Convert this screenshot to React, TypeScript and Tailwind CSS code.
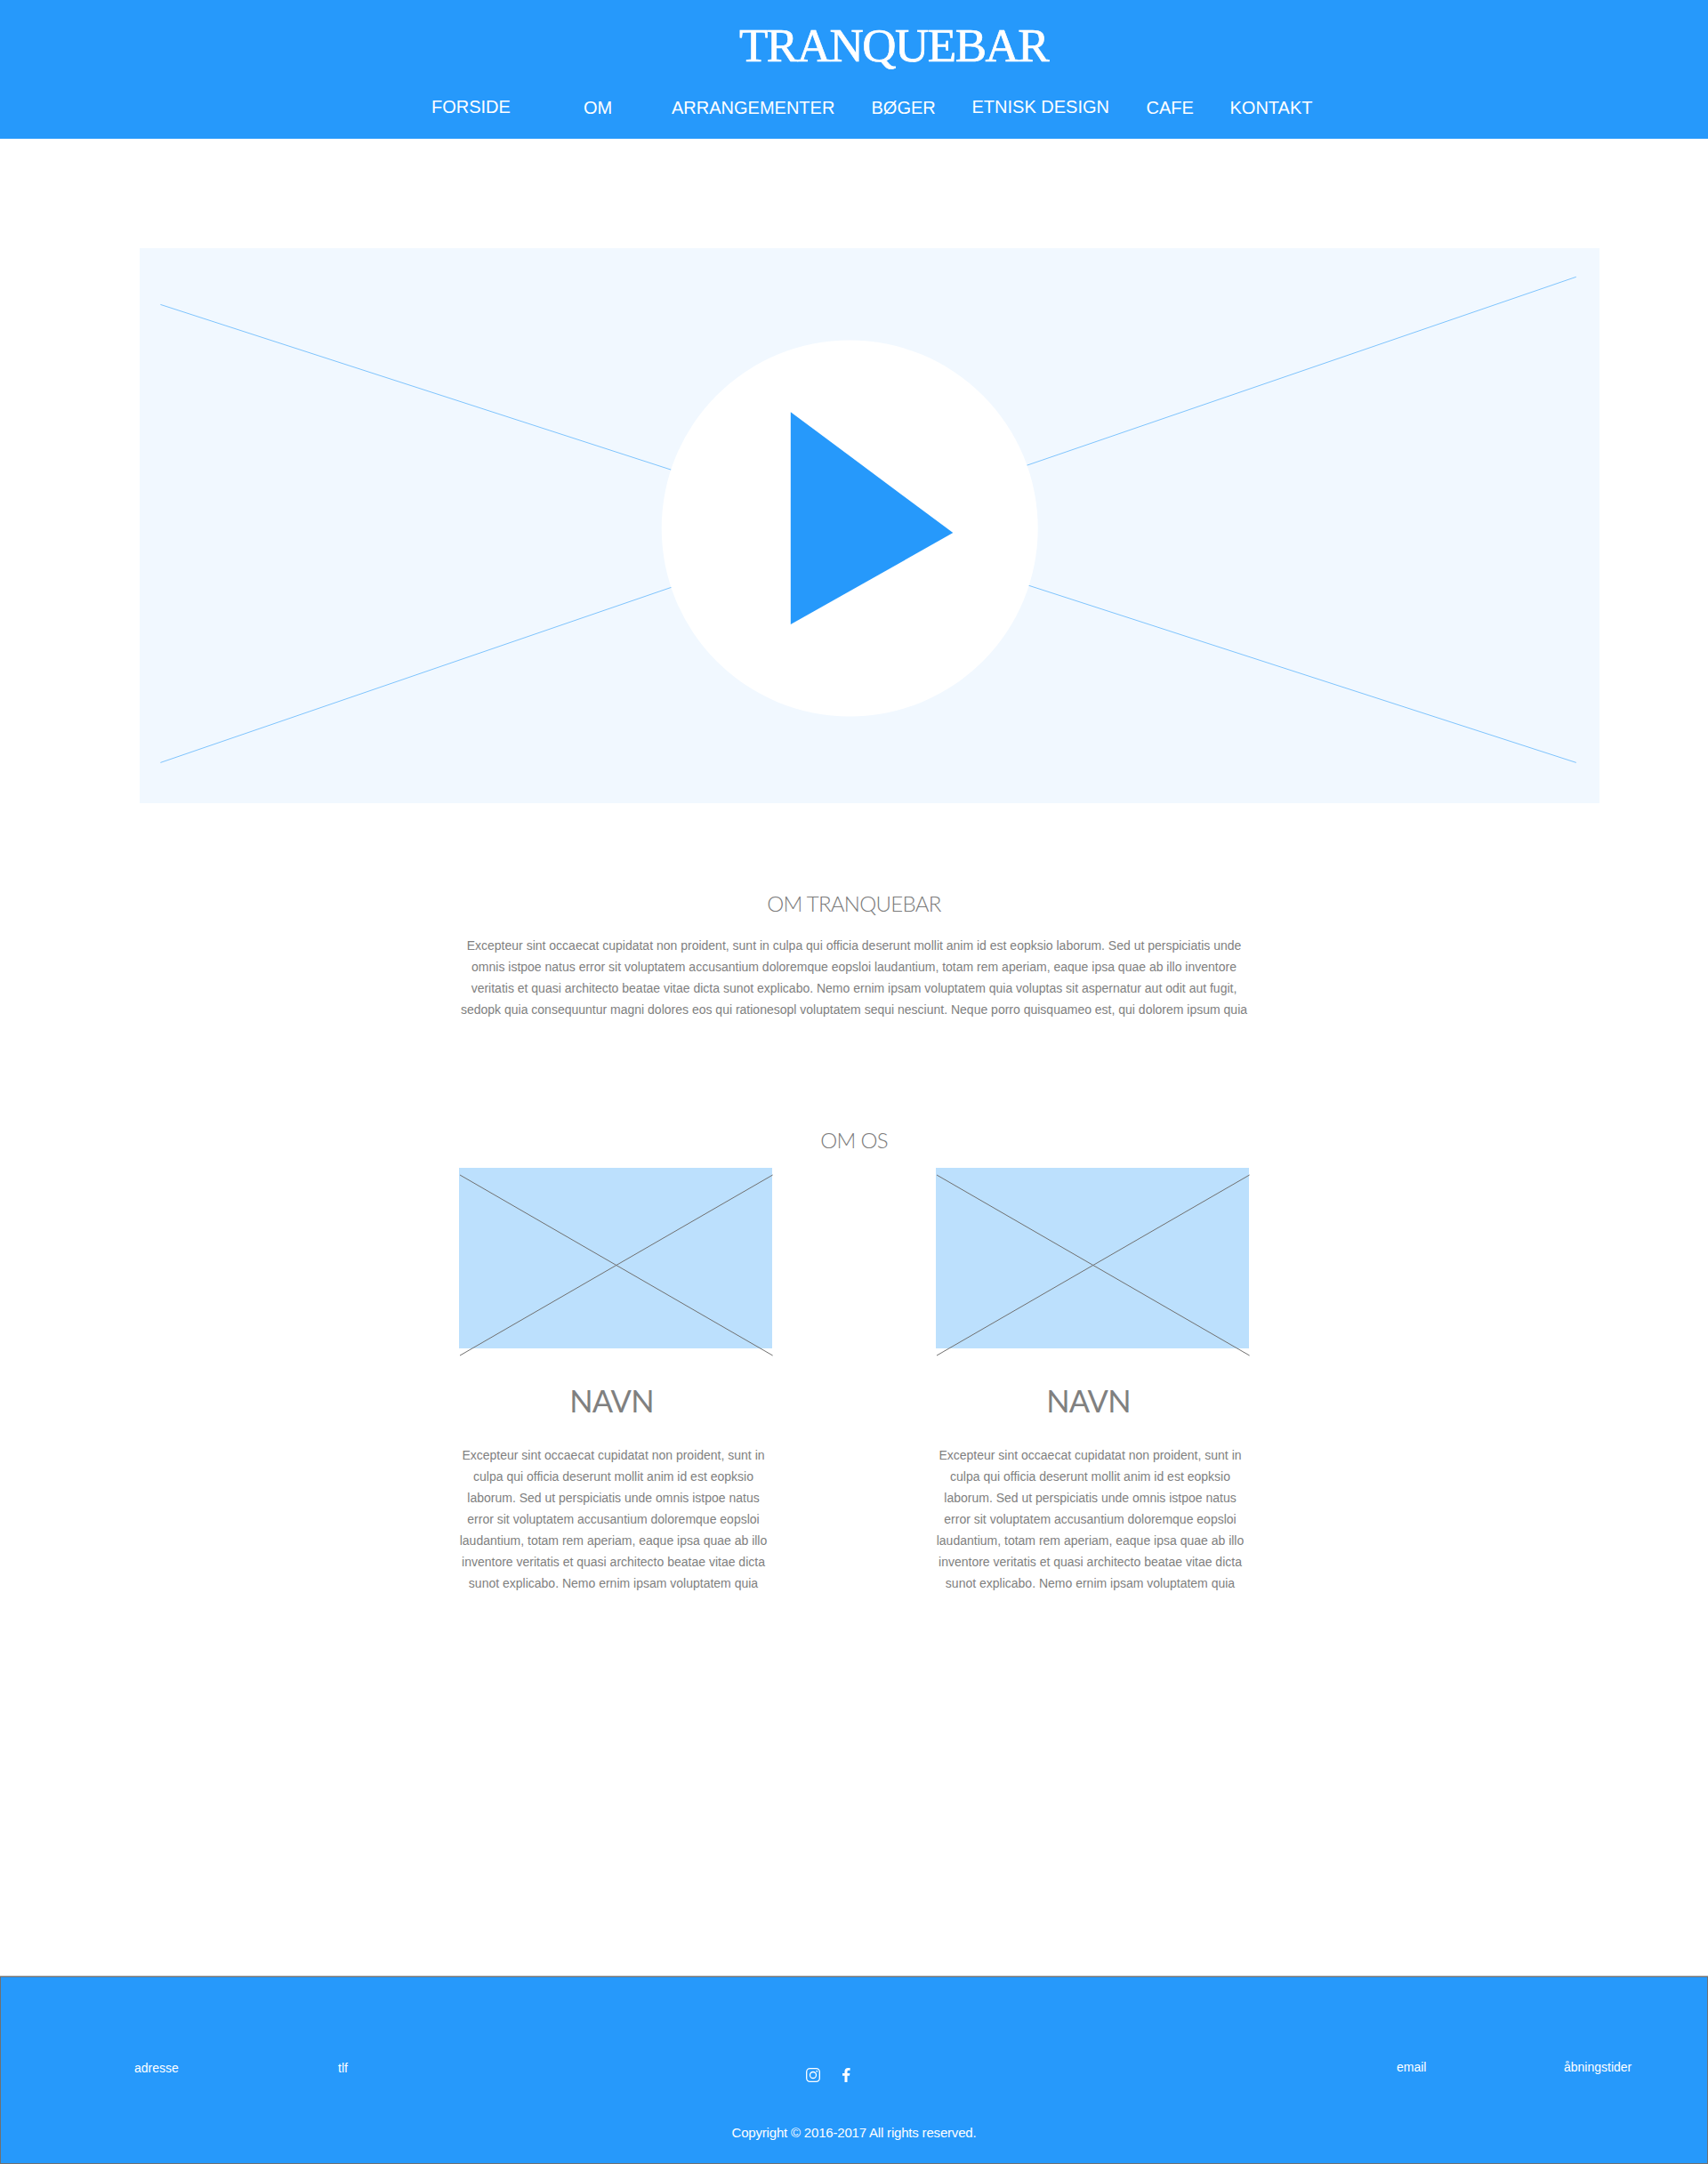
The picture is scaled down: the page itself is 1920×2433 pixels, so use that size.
import React from "react";

const navItems = [
  { label: "FORSIDE", raised: true },
  { label: "OM", raised: false },
  { label: "ARRANGEMENTER", raised: false },
  { label: "BØGER", raised: false },
  { label: "ETNISK DESIGN", raised: true },
  { label: "CAFE", raised: false },
  { label: "KONTAKT", raised: false },
];

const aboutLines = [
  "Excepteur sint occaecat cupidatat non proident, sunt in culpa qui officia deserunt mollit anim id est eopksio laborum. Sed ut perspiciatis unde",
  "omnis istpoe natus error sit voluptatem accusantium doloremque eopsloi laudantium, totam rem aperiam, eaque ipsa quae ab illo inventore",
  "veritatis et quasi architecto beatae vitae dicta sunot explicabo. Nemo ernim ipsam voluptatem quia voluptas sit aspernatur aut odit aut fugit,",
  "sedopk quia consequuntur magni dolores eos qui rationesopl voluptatem sequi nesciunt. Neque porro quisquameo est, qui dolorem ipsum quia",
];

const personLines = [
  "Excepteur sint occaecat cupidatat non proident, sunt in",
  "culpa qui officia deserunt mollit anim id est eopksio",
  "laborum. Sed ut perspiciatis unde omnis istpoe natus",
  "error sit voluptatem accusantium doloremque eopsloi",
  "laudantium, totam rem aperiam, eaque ipsa quae ab illo",
  "inventore veritatis et quasi architecto beatae vitae dicta",
  "sunot explicabo. Nemo ernim ipsam voluptatem quia",
];

function Lines({ lines }: { lines: string[] }) {
  return (
    <p className="flex flex-col items-center text-[14px] leading-[24px] whitespace-nowrap text-[#808080]">
      {lines.map((l) => (
        <span key={l}>{l}</span>
      ))}
    </p>
  );
}

function Header() {
  return (
    <header className="h-[156px] bg-[#2699fb] text-white">
      <h1 className="ml-[831px] pt-[21px] font-['Liberation_Serif',serif] text-[53px] leading-[60px] tracking-[-1.5px] [-webkit-text-stroke:0.7px_white]">
        TRANQUEBAR
      </h1>
      <nav className="mt-[25px] ml-[485px] grid grid-cols-[171px_99px_224.5px_113px_196px_94px_auto] text-[20px] leading-[28px] whitespace-nowrap">
        {navItems.map((n) => (
          <a key={n.label} className={n.raised ? "" : "pt-px"}>
            {n.label}
          </a>
        ))}
      </nav>
    </header>
  );
}

function Video() {
  return (
    <svg className="mt-[123px] ml-[157px] block bg-[#f1f8ff]" width="1641" height="624" viewBox="157 279 1641 624">
      <g stroke="#7fc4fd" strokeWidth="1">
        <line x1="180.4" y1="342.4" x2="1771.8" y2="857.4" />
        <line x1="180.4" y1="857.4" x2="1771.8" y2="311.3" />
      </g>
      <circle cx="955.2" cy="594" r="211.5" fill="#fff" />
      <path d="M888.8 463.2 L1071.3 599.1 L888.8 702 Z" fill="#2699fb" />
    </svg>
  );
}

function SectionTitle({ children }: { children: string }) {
  return (
    <h2 className="text-center font-['Lato',sans-serif] text-[24px] leading-[32px] font-light tracking-[-0.7px] text-[#7b7b7b]">
      {children}
    </h2>
  );
}

function Person() {
  return (
    <article className="w-[352px]">
      <svg className="block overflow-visible bg-[#bce0fd]" width="352" height="203" viewBox="0 0 352 203">
        <g stroke="#707070" strokeWidth="1">
          <line x1="1" y1="8" x2="352.6" y2="211" />
          <line x1="1" y1="211" x2="352.6" y2="8" />
        </g>
      </svg>
      <h3 className="mt-[37px] pr-[9px] text-center font-['Lato',sans-serif] text-[34.5px] leading-[44px] tracking-[-0.7px] text-[#808080]">
        NAVN
      </h3>
      <div className="mt-[27px] pr-[5px]">
        <Lines lines={personLines} />
      </div>
    </article>
  );
}

function Footer() {
  return (
    <footer className="mt-[429px] border-t border-[#c0c4c8] text-[14px] leading-[20px] text-white">
      <div className="h-[211px] border border-[#707070] bg-[#2699fb]">
        <div className="box-content flex h-[30px] pt-[91px]">
          <span className="ml-[150px] w-[229px] pt-px">adresse</span>
          <span className="w-[526px] pt-px">tlf</span>
          <svg className="mt-[11px]" width="16" height="16" viewBox="0 0 16 16" fill="none" stroke="#fff" strokeWidth="1.3">
            <rect x="0.7" y="0.7" width="14.6" height="14.6" rx="3.8" />
            <circle cx="8" cy="8" r="3.5" />
            <circle cx="12.3" cy="3.7" r="0.9" fill="#fff" stroke="none" />
          </svg>
          <svg className="mt-[11px] ml-[25px]" width="9" height="16" viewBox="0 0 9 16" fill="#fff">
            <path d="M2.5 16V8.8H0V6h2.5V3.8C2.5 1.3 4 0 6.2 0 7.3 0 8.3.1 8.6.1v2.6H7C5.800 2.700 5.500 3.300 5.500 4.100V6h2.900L8 8.800H5.500V16Z" />
          </svg>
          <span className="ml-[614px] w-[188px]">email</span>
          <span>åbningstider</span>
        </div>
        <p className="mt-[44px] text-center text-[15px] leading-[20px] tracking-[-0.19px]">
          Copyright © 2016-2017 All rights reserved.
        </p>
      </div>
    </footer>
  );
}

export default function App() {
  return (
    <div className="w-[1920px] bg-white font-['Liberation_Sans',Arial,sans-serif]">
      <Header />
      <Video />
      <section className="mt-[97px]">
        <SectionTitle>OM TRANQUEBAR</SectionTitle>
        <div className="mt-[19px]">
          <Lines lines={aboutLines} />
        </div>
      </section>
      <section className="mt-[119px]">
        <SectionTitle>OM OS</SectionTitle>
        <div className="mt-[15px] ml-[516px] flex gap-[184px]">
          <Person />
          <Person />
        </div>
      </section>
      <Footer />
    </div>
  );
}
